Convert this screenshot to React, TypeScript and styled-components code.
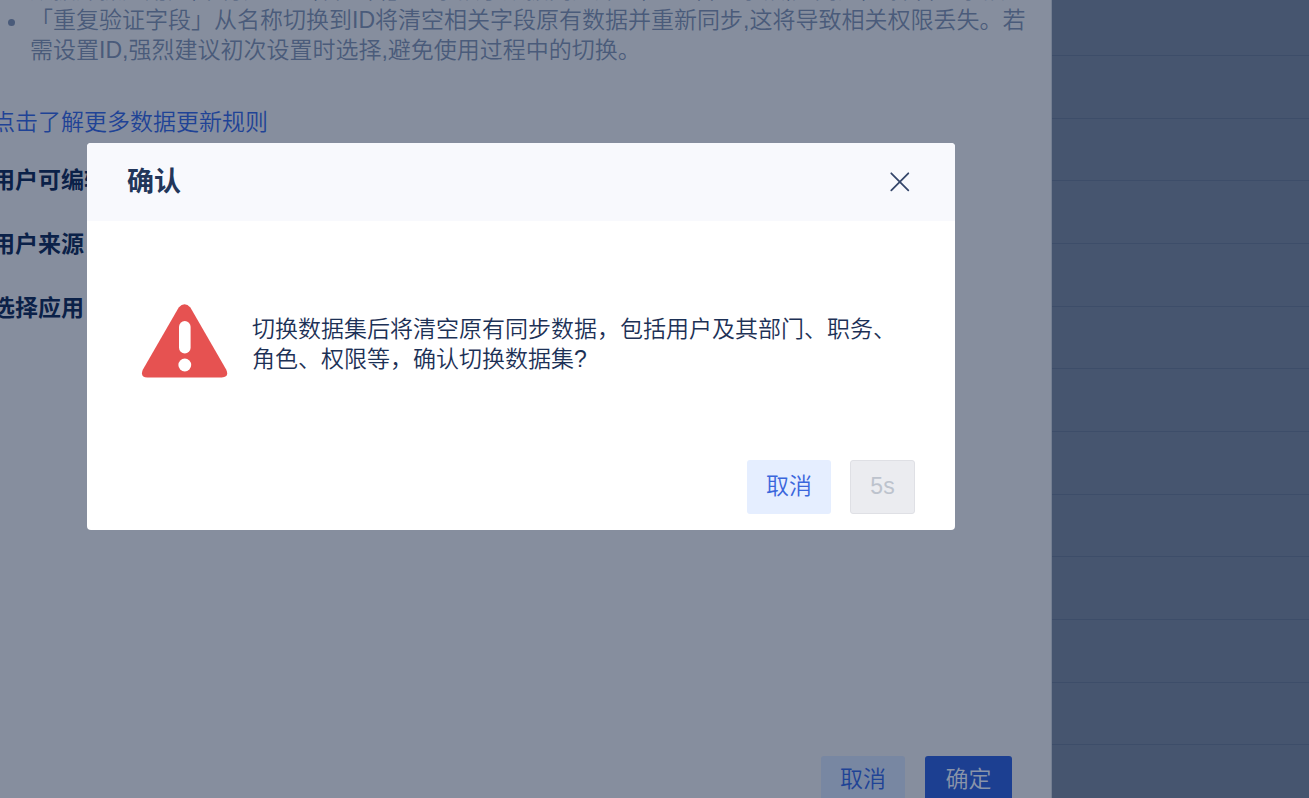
import React from 'react';
import styled, { createGlobalStyle, css } from 'styled-components';

const GlobalStyle = createGlobalStyle`
  * { box-sizing: border-box; }
  body {
    margin: 0;
    overflow: hidden;
    background: #46556f;
    font-family: "Liberation Sans", "Noto Sans CJK SC", sans-serif;
    font-size: 23px;
    line-height: 30px;
    font-weight: 350;
  }
  button { font: inherit; cursor: pointer; }
`;

const Page = styled.div`
  display: flex;
  height: 100vh;
  overflow: hidden;
`;

const Drawer = styled.main`
  flex: 1;
  min-width: 0;
  display: flex;
  flex-direction: column;
  overflow: hidden;
  background: #868e9e;
  border-right: 1px solid #747f92;
`;

const Scrolled = styled.div`
  flex: 1;
  min-height: 0;
  margin: -25px 0 0 -8px;
`;

const Rules = styled.ul`
  margin: 0 16px 42px 0;
  padding-left: 38px;
  color: #4a5b7a;
  list-style: none;
`;

const Rule = styled.li`
  position: relative;
  &::before {
    content: '';
    position: absolute;
    left: -22px;
    top: 14px;
    width: 7px;
    height: 7px;
    border-radius: 50%;
    background: #4a5b7a;
  }
`;

const MoreLink = styled.a`
  display: block;
  margin-bottom: 28px;
  color: #1f4396;
  text-decoration: none;
`;

const FieldLabel = styled.h3`
  margin: 0 0 34px;
  font-size: 23px;
  line-height: 30px;
  font-weight: 700;
  color: #0b2148;
`;

const DrawerFooter = styled.footer`
  flex: none;
  display: flex;
  justify-content: flex-end;
  align-items: flex-start;
  gap: 20px;
  height: 42px;
  padding-right: 39px;
`;

const TableBackdrop = styled.aside`
  flex: none;
  width: 257px;
`;

const TableRow = styled.div`
  height: 63px;
  border-bottom: 1px solid #3d4d69;
  &:nth-child(3n) { height: 62px; }
  &:first-child { height: 56px; }
`;

type Tone = 'light' | 'disabled' | 'dimLight' | 'dimPrimary';

const tones = {
  light: css`width: 84px; background: #e5eeff; color: #3a66dc;`,
  disabled: css`width: 65px; background: #ebecf0; border-color: #dfe0e5; color: #bdc3cd; cursor: not-allowed;`,
  dimLight: css`width: 84px; padding-bottom: 8px; background: #7887a2; color: #1f4396;`,
  dimPrimary: css`width: 87px; padding-bottom: 8px; background: #1c3f91; color: #8994a9;`,
};

const Button = styled.button<{ $tone: Tone }>`
  flex: none;
  height: 54px;
  padding: 0 0 2px;
  border: 1px solid transparent;
  border-radius: 3px;
  ${({ $tone }) => tones[$tone]}
`;

const Overlay = styled.div`
  position: fixed;
  inset: 0;
  padding: 143px 87px 0;
`;

const Dialog = styled.section`
  width: 868px;
  max-width: 100%;
  border-radius: 4px;
  overflow: hidden;
  background: #fff;
`;

const DialogHeader = styled.header`
  display: flex;
  align-items: center;
  justify-content: space-between;
  height: 78px;
  padding: 0 39px 0 40px;
  background: #f8f9fd;
`;

const DialogTitle = styled.h2`
  margin: 0;
  font-size: 27px;
  line-height: 36px;
  font-weight: 700;
  color: #22365a;
`;

const CloseButton = styled.button`
  display: flex;
  align-items: center;
  justify-content: center;
  width: 32px;
  height: 32px;
  padding: 0;
  border: 0;
  background: none;
  color: #34466a;
`;

const DialogBody = styled.div`
  display: flex;
  align-items: center;
  gap: 24px;
  height: 239px;
  padding: 0 55px 0 54px;
`;

const Message = styled.p`
  flex: 1;
  margin: 0;
  padding-top: 6px;
  color: #1d3156;
`;

const DialogFooter = styled.footer`
  display: flex;
  justify-content: flex-end;
  gap: 19px;
  padding: 0 40px 16px;
`;

export default function App() {
  return (
    <>
      <GlobalStyle />
      <Page>
        <Drawer>
          <Scrolled>
            <Rules>
              <Rule>数据库抓建用户,不行处理这,若「管」理字段于数据同步库里,选为管理字段,先同步,选择管理字段。</Rule>
              <Rule>「重复验证字段」从名称切换到ID将清空相关字段原有数据并重新同步,这将导致相关权限丢失。若需设置ID,强烈建议初次设置时选择,避免使用过程中的切换。</Rule>
            </Rules>
            <MoreLink href="#rules">点击了解更多数据更新规则</MoreLink>
            <FieldLabel>用户可编辑</FieldLabel>
            <FieldLabel>用户来源</FieldLabel>
            <FieldLabel>选择应用</FieldLabel>
          </Scrolled>
          <DrawerFooter>
            <Button type="button" $tone="dimLight">取消</Button>
            <Button type="button" $tone="dimPrimary">确定</Button>
          </DrawerFooter>
        </Drawer>
        <TableBackdrop>
          {Array.from({ length: 13 }, (_, i) => <TableRow key={i} />)}
        </TableBackdrop>
      </Page>
      <Overlay>
        <Dialog role="dialog" aria-modal="true" aria-labelledby="confirm-title">
          <DialogHeader>
            <DialogTitle id="confirm-title">确认</DialogTitle>
            <CloseButton type="button" aria-label="关闭">
              <svg width="20" height="20" viewBox="0 0 20 20" fill="none" stroke="currentColor" strokeWidth="1.8" strokeLinecap="round">
                <path d="M1.3 1.3 18.3 18.3M18.3 1.3 1.3 18.3" />
              </svg>
            </CloseButton>
          </DialogHeader>
          <DialogBody>
            <svg width="87" height="74" viewBox="0 0 87 74" aria-hidden="true">
              <path d="M37.7 3.6Q43.6-3.2 49.4 3.6L85.3 65.8Q88.4 73.2 80.8 73.4H6.4Q-1.2 73.2 1.8 65.8Z" fill="#e65251" />
              <rect x="38" y="17" width="11.6" height="32.5" rx="5.8" fill="#fff" />
              <circle cx="43.8" cy="61" r="6.4" fill="#fff" />
            </svg>
            <Message>切换数据集后将清空原有同步数据，包括用户及其部门、职务、角色、权限等，确认切换数据集?</Message>
          </DialogBody>
          <DialogFooter>
            <Button type="button" $tone="light">取消</Button>
            <Button type="button" $tone="disabled" disabled>5s</Button>
          </DialogFooter>
        </Dialog>
      </Overlay>
    </>
  );
}
